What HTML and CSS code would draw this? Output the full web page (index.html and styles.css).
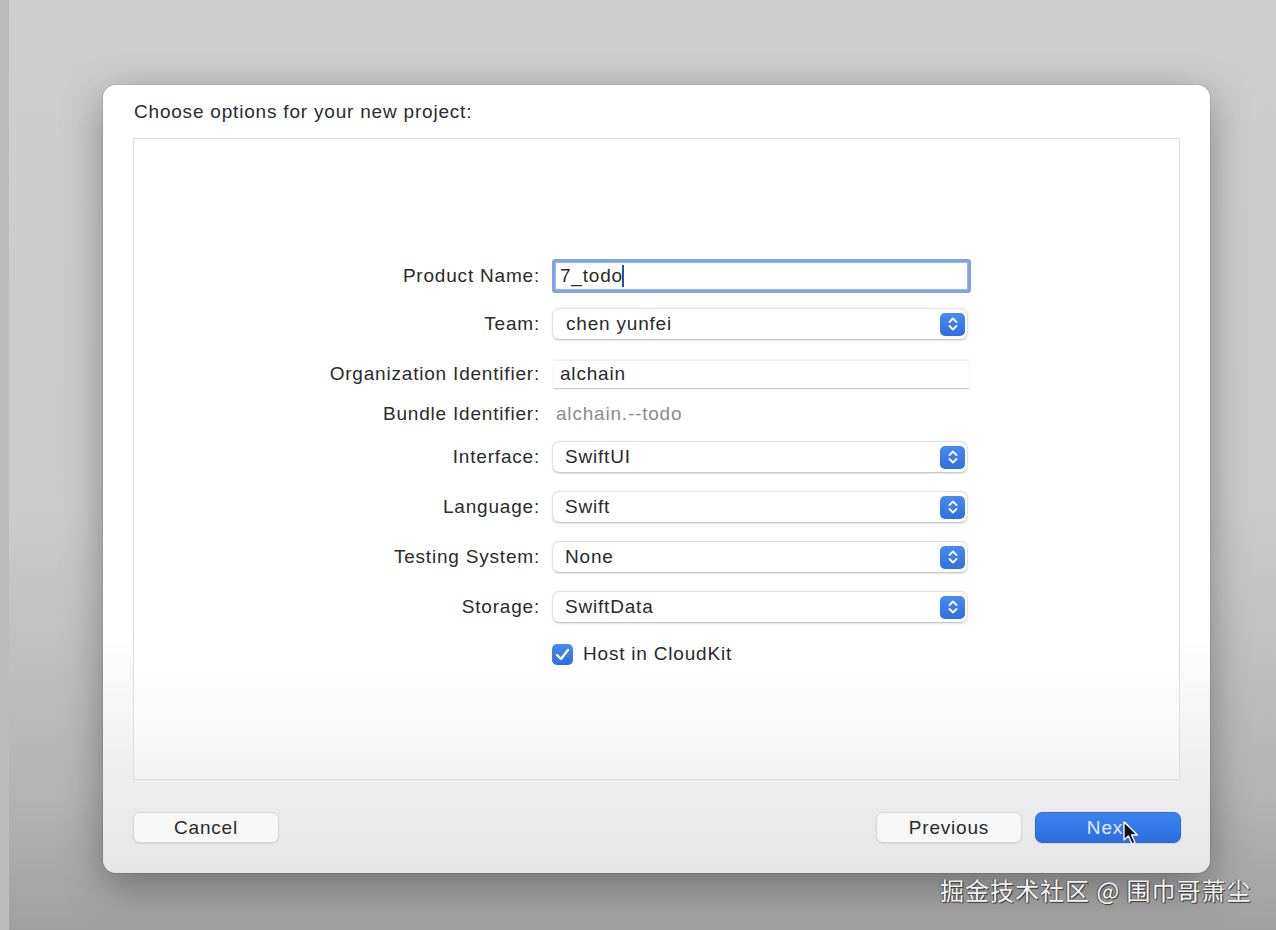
FILE: index.html
```html
<!DOCTYPE html>
<html lang="en">
<head>
    <meta charset="UTF-8">
    <title>Choose options for your new project</title>
    <link rel="stylesheet" href="styles.css">
</head>
<body>
    <div class="screen">
        <div class="dialog">
            <div class="dialog-title">Choose options for your new project:</div>

            <div class="panel">
                <div class="options">
                    <label class="opt-label">Product Name:</label>
                    <div class="text-field focused"><span>7_todo</span><span class="caret"></span></div>

                    <label class="opt-label">Team:</label>
                    <div class="popup team"><span>chen yunfei</span>
                        <span class="stepper"><svg width="12" height="16" viewBox="0 0 12 16"><path d="M2.5 6 L6 2.5 L9.5 6 M2.5 10 L6 13.5 L9.5 10" fill="none" stroke="#fff" stroke-width="1.8" stroke-linecap="round" stroke-linejoin="round"/></svg></span>
                    </div>

                    <label class="opt-label">Organization Identifier:</label>
                    <div class="text-field plain"><span>alchain</span></div>

                    <label class="opt-label">Bundle Identifier:</label>
                    <div class="bundle">alchain.--todo</div>

                    <label class="opt-label">Interface:</label>
                    <div class="popup"><span>SwiftUI</span>
                        <span class="stepper"><svg width="12" height="16" viewBox="0 0 12 16"><path d="M2.5 6 L6 2.5 L9.5 6 M2.5 10 L6 13.5 L9.5 10" fill="none" stroke="#fff" stroke-width="1.8" stroke-linecap="round" stroke-linejoin="round"/></svg></span>
                    </div>

                    <label class="opt-label">Language:</label>
                    <div class="popup"><span>Swift</span>
                        <span class="stepper"><svg width="12" height="16" viewBox="0 0 12 16"><path d="M2.5 6 L6 2.5 L9.5 6 M2.5 10 L6 13.5 L9.5 10" fill="none" stroke="#fff" stroke-width="1.8" stroke-linecap="round" stroke-linejoin="round"/></svg></span>
                    </div>

                    <label class="opt-label">Testing System:</label>
                    <div class="popup"><span>None</span>
                        <span class="stepper"><svg width="12" height="16" viewBox="0 0 12 16"><path d="M2.5 6 L6 2.5 L9.5 6 M2.5 10 L6 13.5 L9.5 10" fill="none" stroke="#fff" stroke-width="1.8" stroke-linecap="round" stroke-linejoin="round"/></svg></span>
                    </div>

                    <label class="opt-label">Storage:</label>
                    <div class="popup"><span>SwiftData</span>
                        <span class="stepper"><svg width="12" height="16" viewBox="0 0 12 16"><path d="M2.5 6 L6 2.5 L9.5 6 M2.5 10 L6 13.5 L9.5 10" fill="none" stroke="#fff" stroke-width="1.8" stroke-linecap="round" stroke-linejoin="round"/></svg></span>
                    </div>

                    <span></span>
                    <div class="check-row">
                        <span class="checkbox"><svg width="15" height="13" viewBox="0 0 15 13"><path d="M2 7 L6 11 L13 2" fill="none" stroke="#fff" stroke-width="2.4" stroke-linecap="round" stroke-linejoin="round"/></svg></span>
                        <span>Host in CloudKit</span>
                    </div>
                </div>
            </div>

            <div class="footer">
                <button class="btn">Cancel</button>
                <div class="footer-right">
                    <button class="btn">Previous</button>
                    <button class="btn primary">Next</button>
                </div>
            </div>
        </div>
    </div>

    <!-- mouse pointer over the Next button -->
    <svg class="cursor" width="18" height="26" viewBox="0 0 18 26">
        <path d="M1 1 L1 19 L5.5 15 L9 23 L12 21.5 L8.5 14 L14.5 14 Z" fill="#111" stroke="#fff" stroke-width="1.3" stroke-linejoin="round"/>
    </svg>

    <div class="watermark">掘金技术社区 @ 围巾哥萧尘</div>
</body>
</html>
```

FILE: styles.css
```css
body {
    margin: 0;
    padding: 0;
    height: 930px;
    overflow: hidden;
    font-family: "Liberation Sans", Arial, sans-serif;
    letter-spacing: 0.8px;
    color: #2a2a2a;
    background:
        linear-gradient(to right, #bcbcbc 0, #bcbcbc 9px, transparent 9px),
        linear-gradient(to bottom, #cdcdcd 0%, #cbcbcb 55%, #b4b4b4 85%, #a0a0a0 100%);
}

.screen {
    padding: 85px 0 0 103px;
}

.dialog {
    width: 1107px;
    height: 788px;
    box-sizing: border-box;
    padding: 0 30px;
    border-radius: 13px;
    background: linear-gradient(to bottom, #ffffff 0%, #ffffff 70%, #f0f0f0 85%, #e6e6e6 100%);
    box-shadow: 0 12px 40px rgba(0, 0, 0, 0.35), 0 0 0 1px rgba(0, 0, 0, 0.08);
}

.dialog-title {
    height: 53px;
    display: flex;
    align-items: center;
    padding-left: 1px;
    font-size: 19px;
    color: #2b2b2b;
}

.panel {
    height: 642px;
    box-sizing: border-box;
    border: 1px solid #dedede;
    background: linear-gradient(to bottom, #ffffff 0%, #ffffff 82%, #f3f3f3 100%);
    padding-top: 113px;
}

.options {
    display: grid;
    grid-template-columns: 405px 418px;
    grid-template-rows: 48px 48px 52px 28px 58px 42px 58px 42px 52px;
    column-gap: 13px;
    align-items: center;
    font-size: 19px;
}

.opt-label {
    text-align: right;
    color: #2b2b2b;
    margin-right: -1px;
}

.text-field {
    height: 28px;
    display: flex;
    align-items: center;
    padding-left: 7px;
    background: #fff;
    box-sizing: border-box;
}

.text-field.focused {
    margin: 0 -1px 0 0;
    height: 34px;
    border: 3px solid #7fa3ea;
    border-radius: 3px;
    padding-left: 5px;
    box-shadow: inset 0 0 0 1px #9bb6ee;
}

.text-field.plain {
    height: 29px;
    margin: 0 1px 0 2px;
    border-top: 1px solid #efefef;
    border-bottom: 1px solid #cfcfcf;
    box-shadow: 0 0 0 0.5px #ececec;
    padding-left: 6px;
}

.caret {
    width: 2px;
    height: 22px;
    background: #1d4fb8;
    margin-left: -1px;
}

.bundle {
    color: #8c8c8c;
    padding-left: 4px;
}

.popup {
    height: 30px;
    margin: 0 3px 0 1px;
    display: flex;
    align-items: center;
    justify-content: space-between;
    padding: 0 2px 0 12px;
    border-radius: 6px;
    background: #fff;
    box-shadow: 0 0.5px 2.5px rgba(0, 0, 0, 0.28), 0 0 0 0.5px rgba(0, 0, 0, 0.06);
}

.popup.team span:first-child {
    padding-left: 1px;
}

.stepper {
    width: 25px;
    height: 23px;
    border-radius: 5px;
    background: linear-gradient(to bottom, #4a8af0, #2f6fdf);
    display: flex;
    align-items: center;
    justify-content: center;
}

.check-row {
    display: flex;
    align-items: center;
    gap: 10px;
}

.checkbox {
    width: 21px;
    height: 21px;
    border-radius: 5px;
    background: linear-gradient(to bottom, #4a8af0, #2f6fdf);
    display: flex;
    align-items: center;
    justify-content: center;
}

.footer {
    display: flex;
    justify-content: space-between;
    margin-top: 32px;
}

.footer-right {
    display: flex;
    gap: 13px;
    margin-right: -1px;
}

.btn {
    width: 146px;
    height: 31px;
    font-family: "Liberation Sans", Arial, sans-serif;
    font-size: 19px;
    letter-spacing: 0.8px;
    color: #2a2a2a;
    background: #f7f7f7;
    border: 1px solid #d6d6d6;
    border-radius: 7px;
    box-shadow: 0 1px 1px rgba(0, 0, 0, 0.08);
    padding: 0;
}

.btn.primary {
    background: linear-gradient(to bottom, #3e82f0, #2b6ddd);
    border-color: #2c6bd6;
    color: #e4edfc;
}

.cursor {
    position: absolute;
    left: 1123px;
    top: 821px;
}

.watermark {
    position: absolute;
    left: 940px;
    top: 872px;
    font-family: "Noto Sans CJK SC", sans-serif;
    font-size: 24px;
    color: #f4f4f4;
    text-shadow: 1px 1px 1px #333, -1px 0 1px #555;
    letter-spacing: 1px;
}
```
